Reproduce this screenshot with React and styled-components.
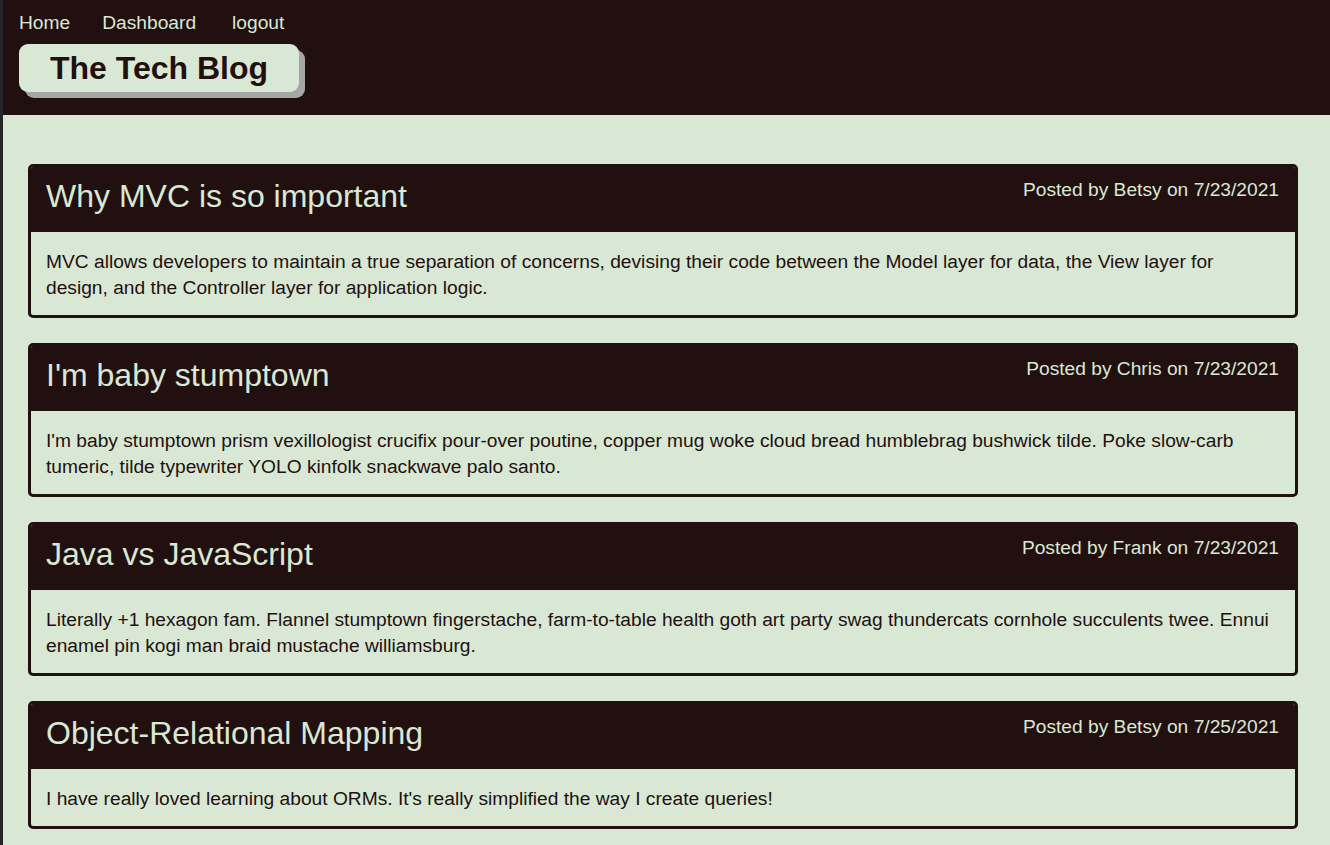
import React from "react";
import styled, { createGlobalStyle } from "styled-components";

const DARK = "#221010";
const LIGHT = "#d9e8d4";

const GlobalStyle = createGlobalStyle`
  html, body {
    margin: 0;
    padding: 0;
    background: ${LIGHT};
  }
  body {
    font-family: "Liberation Sans", Arial, Helvetica, sans-serif;
    color: ${DARK};
  }
  * { box-sizing: border-box; }
`;

const Page = styled.div`
  min-height: 845px;
  border-left: 3px solid #262626;
  background: ${LIGHT};
`;

const Header = styled.header`
  background: ${DARK};
  height: 115px;
  padding: 12px 16px 0;
`;

const Nav = styled.nav`
  display: flex;
  align-items: center;
  height: 22px;
`;

const NavLink = styled.a`
  color: ${LIGHT};
  text-decoration: none;
  font-size: 19.2px;
  line-height: 22px;
  margin-right: ${(p) => p.$gap || 0}px;
`;

const TitleBadge = styled.h1`
  display: inline-block;
  margin: 10px 0 0;
  height: 48px;
  line-height: 48px;
  padding: 0 31px;
  background: ${LIGHT};
  color: ${DARK};
  font-size: 32px;
  font-weight: bold;
  border-radius: 9px;
  box-shadow: 6px 6px 0 #a6a6a6;
`;

const Main = styled.main`
  display: flex;
  flex-direction: column;
  gap: 25px;
  padding: 49px 32px 20px 25px;
`;

const Card = styled.article`
  border: 3px solid ${DARK};
  border-radius: 5px;
  overflow: hidden;
  background: ${LIGHT};
`;

const CardHeader = styled.div`
  background: ${DARK};
  color: ${LIGHT};
  display: flex;
  justify-content: space-between;
  align-items: flex-start;
  padding: 11px 16px 16px 15px;
  height: 65px;
`;

const CardTitle = styled.h2`
  margin: 0;
  font-size: 32px;
  font-weight: normal;
  line-height: 37px;
`;

const Meta = styled.p`
  margin: 1px 0 0;
  font-size: 19.2px;
  line-height: 22px;
  white-space: nowrap;
`;

const CardBody = styled.p`
  margin: 0;
  padding: 17px 15px 14px;
  font-size: 19.2px;
  line-height: 26px;
  color: ${DARK};
`;

const posts = [
  {
    title: "Why MVC is so important",
    author: "Betsy",
    date: "7/23/2021",
    body:
      "MVC allows developers to maintain a true separation of concerns, devising their code between the Model layer for data, the View layer for design, and the Controller layer for application logic.",
  },
  {
    title: "I'm baby stumptown",
    author: "Chris",
    date: "7/23/2021",
    body:
      "I'm baby stumptown prism vexillologist crucifix pour-over poutine, copper mug woke cloud bread humblebrag bushwick tilde. Poke slow-carb tumeric, tilde typewriter YOLO kinfolk snackwave palo santo.",
  },
  {
    title: "Java vs JavaScript",
    author: "Frank",
    date: "7/23/2021",
    body:
      "Literally +1 hexagon fam. Flannel stumptown fingerstache, farm-to-table health goth art party swag thundercats cornhole succulents twee. Ennui enamel pin kogi man braid mustache williamsburg.",
  },
  {
    title: "Object-Relational Mapping",
    author: "Betsy",
    date: "7/25/2021",
    body:
      "I have really loved learning about ORMs. It's really simplified the way I create queries!",
  },
];

export default function App() {
  return (
    <>
      <GlobalStyle />
      <Page>
        <Header>
          <Nav>
            <NavLink href="#" $gap={32}>Home</NavLink>
            <NavLink href="#" $gap={36}>Dashboard</NavLink>
            <NavLink href="#">logout</NavLink>
          </Nav>
          <TitleBadge>The Tech Blog</TitleBadge>
        </Header>
        <Main>
          {posts.map((p) => (
            <Card key={p.title}>
              <CardHeader>
                <CardTitle>{p.title}</CardTitle>
                <Meta>
                  Posted by {p.author} on {p.date}
                </Meta>
              </CardHeader>
              <CardBody>{p.body}</CardBody>
            </Card>
          ))}
        </Main>
      </Page>
    </>
  );
}
